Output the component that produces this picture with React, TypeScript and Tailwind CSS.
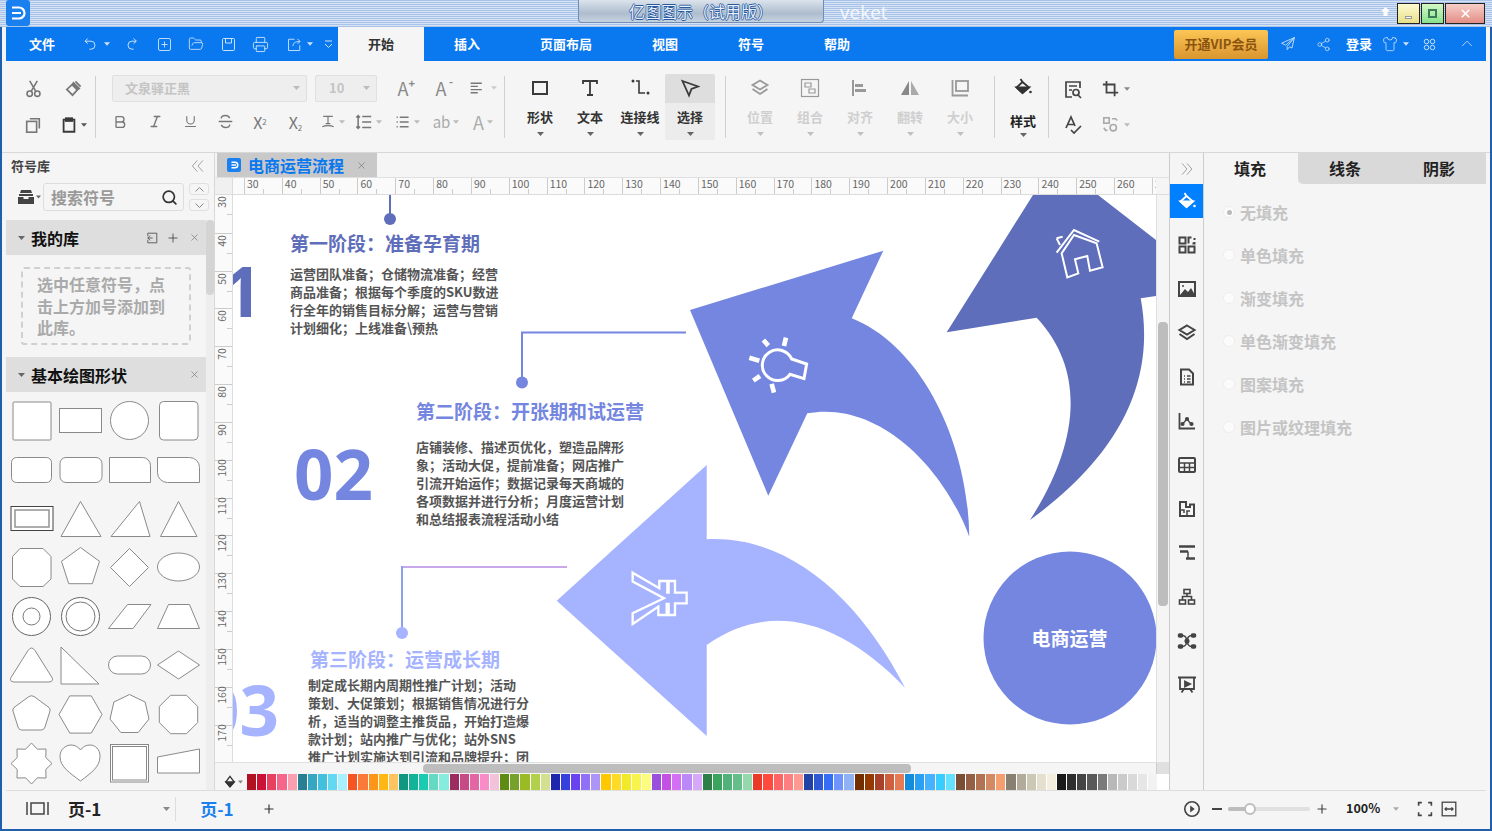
import React from 'react';
import { Bold, Italic, Underline, Search, Plus, X, Printer, FolderOpen, Share2, Shirt } from 'lucide-react';

const Caret = ({ c = '#888', w = 7 }: { c?: string; w?: number }) => (
  <svg width={w} height={4} viewBox="0 0 7 4" className="shrink-0"><path d="M0 0h7L3.5 4z" fill={c} /></svg>
);

const I = ({ s = 20, sw = 1.5, c, children }: { s?: number; sw?: number; c?: string; children: React.ReactNode }) => (
  <svg width={s} height={s} viewBox="0 0 20 20" fill="none" stroke={c || 'currentColor'} strokeWidth={sw} className="shrink-0">{children}</svg>
);

const MenuIcon = ({ w, children, caret }: { w: string; children: React.ReactNode; caret?: boolean }) => (
  <div className={`${w} flex items-center justify-center gap-[5px] text-[#cfe4fb]`}>
    {children}
    {caret && <Caret c="#cfe4fb" w={6} />}
  </div>
);

const palette = [
  '#b01224','#cc1136','#e8415f','#f6658a','#fb9fb0','#277f94','#35a7c3','#42c0de','#62d9f0','#a8efff',
  '#f55522','#fb7a3a','#fd9618','#ffb813','#fec45f','#0f9780','#13b39a','#19cbb0','#66d9c5','#86ecdd',
  '#9c2b60','#c54a86','#e365a3','#f98cc6','#f2c2db','#5f8a14','#76a12a','#9bbb24','#b1d04b','#d3e091',
  '#1e26ae','#3640dc','#6a43f0','#8f70f7','#ab96f8','#ffc800','#fddb27','#f2ea27','#f8f44c','#fcfd7f',
  '#9a50dc','#c251e4','#d46ef5','#bb88f8','#d8a8f8','#2e7f47','#3aa35c','#52b07a','#65be8a','#95d8ab',
  '#ea3a2a','#ff4a3d','#ff6465','#ff7f80','#ff9a90','#2243a6','#2f58d5','#356ef5','#6f94fc','#8fb2f5',
  '#732e00','#943a00','#a9402a','#cf5f3e','#e57a55','#138cdc','#2aa0f5','#45b2ff','#38ccff','#66e0ff',
  '#7a4e35','#945f45','#b27352','#d38a62','#f59e70','#897f72','#b2ab9b','#ccc8b6','#e5dfd0','#f3eede',
  '#1a1a1a','#2e2e2e','#444444','#595959','#7a7a7a','#b8b8b8','#cacaca','#d9d9d9','#e6e6e6','#f2f2f2','#ffffff',
];

const poly = (n: number, r: number, rot = -90, cx = 24.5, cy = 24.5) =>
  Array.from({ length: n }, (_, i) => {
    const a = ((rot + (i * 360) / n) * Math.PI) / 180;
    return `${(cx + r * Math.cos(a)).toFixed(1)},${(cy + r * Math.sin(a)).toFixed(1)}`;
  }).join(' ');

const star = (n: number, R: number, r2: number) =>
  Array.from({ length: n * 2 }, (_, i) => {
    const a = ((-90 + (i * 180) / n) * Math.PI) / 180;
    const q = i % 2 ? r2 : R;
    return `${(24.5 + q * Math.cos(a)).toFixed(1)},${(24.5 + q * Math.sin(a)).toFixed(1)}`;
  }).join(' ');

const shapes: React.ReactNode[] = [
  <rect x="6" y="6" width="38" height="38" rx="1" />,
  <rect x="3.5" y="12.5" width="42" height="24" />,
  <circle cx="24.5" cy="24.5" r="19" />,
  <rect x="5.5" y="5.5" width="38.5" height="38.5" rx="4" />,
  <rect x="4.5" y="12.5" width="40" height="25" rx="5" />,
  <rect x="4" y="12.5" width="42" height="25" rx="6" />,
  <path d="M4.5 12.5h33a8 8 0 0 1 8 8v17h-41z" />,
  <path d="M3.5 12.5h32a10 10 0 0 1 10 10v15h-32a10 10 0 0 1-10-10z" />,
  <g><rect x="4" y="12.5" width="42" height="24" stroke="#444" /><rect x="8" y="16" width="34" height="17" strokeWidth="1.6" stroke="#999" /></g>,
  <polygon points="24.5,7.5 45,42.5 5,42.5" />,
  <polygon points="34.5,7.5 45,42.5 6,42.5" />,
  <polygon points="24.5,7.5 43,42.5 6.5,42.5" />,
  <polygon points="13,5.5 36,5.5 44,13.5 44,36 36,43.5 13,43.5 5.5,36 5.5,13.5" />,
  <polygon points={poly(5, 20)} />,
  <polygon points={poly(4, 19)} />,
  <ellipse cx="24.5" cy="24" rx="21" ry="14" />,
  <g><circle cx="24.5" cy="24.5" r="19" stroke="#666" /><circle cx="24.5" cy="24.5" r="8.5" stroke="#777" /></g>,
  <g><circle cx="24.5" cy="24.5" r="19" stroke="#666" /><circle cx="24.5" cy="24.5" r="14.5" stroke="#777" /></g>,
  <polygon points="22.5,12.5 46,12.5 28,36.5 3.5,36.5" />,
  <polygon points="14.5,12.5 35.5,12.5 45.5,36.5 3.5,36.5" />,
  <path d="M21 9.5q3.5-5 7 0l17 27q2 4-3 4.500H7q-5-.5-3-4.500z" />,
  <polygon points="5,6 43,43 5,43" />,
  <rect x="3.500" y="15" width="42" height="18" rx="9" />,
  <polygon points="24.5,10 45.5,24 24.500,38 3.500,24" />,
  <path d="M22 6.500q2.500-1.500 5 0l15 11q1.500 1.500 1 3.500l-5 16q-1 3-3.500 3h-20q-2.500 0-3.500-3l-5-16q-.5-2 1-3.500z" />,
  <polygon points={poly(6, 21.5, 0)} />,
  <polygon points={poly(7, 20)} />,
  <polygon points={poly(8, 20.8, 22.5)} />,
  <polygon points={star(8, 20.5, 15.5)} />,
  <path d="M24.500 42C14 34 4 28 4 17.500 4 10 10 6 15 6c4 0 7.500 2 9.500 5 2-3 5.500-5 9.500-5 5 0 10 4 10 11.500C44 28 35 34 24.500 42z" />,
  <g stroke="#888"><rect x="5.500" y="5.500" width="38" height="37.500" strokeWidth="1" /><rect x="7.500" y="7.500" width="34" height="33.500" strokeWidth="1" /></g>,
  <polygon points="3.500,18 45.500,10 45.500,34 3.500,34" />,
];

const rightIcons: React.ReactNode[] = [
  <I s={20} sw={2}><rect x="2.500" y="2.500" width="6" height="6" /><rect x="2.500" y="11.500" width="6" height="6" /><rect x="11.500" y="11.500" width="6" height="6" /><path d="M11.500 8.500v-6h3M17.500 3v2M17.500 7v1.500h-2" /></I>,
  <I s={20} sw={2}><rect x="2" y="3" width="16" height="14" /><path d="M3 16l5-6 3 3 3-4 4 7z" fill="currentColor" stroke="none" /><circle cx="6" cy="7" r="1" fill="currentColor" stroke="none" /></I>,
  <I s={20} sw={2}><path d="M10 2.500l7.500 4.500-7.500 4.500L2.500 7z" /><path d="M2.500 11l7.500 5 7.500-5" /></I>,
  <I s={20} sw={2}><path d="M4 2.500h8l4 4v11H4z" /><path d="M7 9h1M10 9h3.500M7 12h1M10 12h3.500M7 15h1M10 15h3.500" strokeWidth="1.500" /></I>,
  <I s={20} sw={1.800}><path d="M2.500 2v15.500H18" /><path d="M5.500 13l4.500-5 4 5" strokeWidth="1.300" /><circle cx="5.500" cy="13" r="1.200" fill="currentColor" /><circle cx="10" cy="8" r="1.200" fill="currentColor" /><circle cx="14.500" cy="13" r="1.200" fill="currentColor" /></I>,
  <I s={20} sw={2}><rect x="2" y="3" width="16" height="14" rx="1" /><path d="M2 8h16M2 12.500h16M7.500 8v9M12.500 8v9" strokeWidth="1.500" /></I>,
  <I s={20} sw={2}><path d="M3 3h6v5h4v-2.500h4V17H3z" /><path d="M3 11h4v3M10 17v-5h3" strokeWidth="1.500" /></I>,
  <I s={20} sw={2}><path d="M2 3.500h16" strokeWidth="2.500" /><path d="M3 8.500h8" strokeWidth="2.500" /><path d="M11 8.500v7" strokeWidth="1.500" /><path d="M9 15.500h9" strokeWidth="2.500" /></I>,
  <I s={20} sw={1.600}><rect x="7" y="2.500" width="6" height="4" /><rect x="2.500" y="13" width="6" height="4" /><rect x="11.500" y="13" width="6" height="4" /><path d="M10 6.500v3M5.500 13V9.500h9V13" /></I>,
  <I s={20} sw={1.500}><rect x="1.500" y="3" width="4" height="3" rx="1" fill="currentColor" /><rect x="14.500" y="3" width="4" height="3" rx="1" fill="currentColor" /><rect x="1.500" y="14" width="4" height="3" rx="1" fill="currentColor" /><rect x="14.500" y="14" width="4" height="3" rx="1" fill="currentColor" /><circle cx="10" cy="10" r="1.800" fill="currentColor" /><path d="M5.500 4.500c3 0 4 2 4.500 5.500s1.500 5.500 4.500 5.500M14.500 4.500c-3 0-4 2-4.500 5.500s-1.500 5.500-4.500 5.500" /></I>,
  <I s={20} sw={1.800}><path d="M1 2.500h18" strokeWidth="2" /><path d="M3 3v11h14V3" /><path d="M8 6.500l5 2.500-5 2.500z" fill="currentColor" /><path d="M7 14l-2.500 3.500M13 14l2.500 3.500" /></I>,
];

const Fill = ({ c = '#333' }: { c?: string }) => (
  <I s={20} sw={1.800} c={c}>
    <path d="M7.500 2l2 3" /><path d="M9.500 5L16 10.500 9.500 16 3.500 10.500z" />
    <path d="M3.500 10.500h12.500L9.500 16z" fill={c} />
    <circle cx="17.500" cy="15" r="1.300" fill={c} stroke="none" />
  </I>
);

const LargeBtn = ({ label, icon, active, dim }: { label: string; icon: React.ReactNode; active?: boolean; dim?: boolean }) => (
  <div className={`w-[50px] h-[66px] rounded-[2px] flex flex-col items-center ${active ? 'bg-[#ececec]' : ''}`}>
    <div className={`w-full h-[29px] flex items-center justify-center rounded-t-[2px] ${active ? 'bg-[#dedede]' : ''} ${dim ? 'text-[#999]' : 'text-[#3a3a3a]'}`}>{icon}</div>
    <div className={`mt-[5px] h-[18px] leading-[18px] text-[13px] font-bold whitespace-nowrap ${dim ? 'text-[#cfcfcf]' : 'text-[#333]'}`}>{label}</div>
    <div className="mt-[6px]"><Caret c={dim ? '#c0c0c0' : '#666'} /></div>
  </div>
);

const Sep = () => <div className="w-px h-[62px] bg-[#cfcfcf] shrink-0" />;

const Cell = ({ w, children, caret, dim }: { w: string; children: React.ReactNode; caret?: boolean; dim?: boolean }) => (
  <div className={`${w} flex items-center justify-center gap-[3px] ${dim ? 'text-[#aaa]' : 'text-[#777]'}`}>
    {children}
    {caret && <Caret c="#bbb" w={6} />}
  </div>
);

const L1 = ['运营团队准备；仓储物流准备；经营', '商品准备；根据每个季度的SKU数进', '行全年的销售目标分解；运营与营销', '计划细化；上线准备\\预热'];
const L2 = ['店铺装修、描述页优化，塑造品牌形', '象；活动大促，提前准备；网店推广', '引流开始运作；数据记录每天商城的', '各项数据并进行分析；月度运营计划', '和总结报表流程活动小结'];
const L3 = ['制定成长期内周期性推广计划；活动', '策划、大促策划；根据销售情况进行分', '析，适当的调整主推货品，开始打造爆', '款计划；站内推广与优化；站外SNS', '推广计划实施达到引流和品牌提升；团'];

const Body = ({ lines }: { lines: string[] }) => (
  <>{lines.map((l) => <div key={l} className="h-[18px] leading-[18px] text-[13px] font-bold text-[#555] whitespace-nowrap">{l}</div>)}</>
);

const Diagram = () => (
  <svg className="absolute inset-0" width="923" height="567" viewBox="233 195 923 567">
    <path d="M390 195V219" stroke="#5f6eba" strokeWidth="2" fill="none" />
    <circle cx="390" cy="219" r="6" fill="#5f6eba" />
    <path d="M686 332.500H522V382" stroke="#7486e0" strokeWidth="2" fill="none" />
    <circle cx="522" cy="382.500" r="6" fill="#7486e0" />
    <path d="M567 567H402" stroke="#c8a8e8" strokeWidth="2" fill="none" />
    <path d="M402 566V633" stroke="#8f9ff0" strokeWidth="2" fill="none" />
    <circle cx="402" cy="633" r="6" fill="#a6b3ff" />

    <path fill="#5f6eba" d="M946.700 332.300L1033 195H1098L1156 240V296L1140.700 298.300C1152 360 1140 440 1030 520C1075 450 1090 375 1036.700 317.700Z" />
    <path fill="#7486e0" d="M883.300 250.700L690 310L768.300 495.700L807.300 413.300C880 400 945 470 969.300 536.700C968 440 920 345 851.700 318.300Z" />
    <path fill="#a6b3ff" d="M706.700 465L556.700 600.700L706.700 736V645C770 600 840 620 905 687.700C860 600 790 535 706.700 539.300Z" />
    <circle cx="1070" cy="638" r="86.500" fill="#7486e0" />

    <g transform="translate(680 190) scale(.3333)" fill="none" stroke="#fff" strokeWidth="6">
      <path d="M1145 190L1182 135L1250 160L1268 232L1230 242L1222 198L1185 208L1195 250L1162 262Z" />
      <path d="M1130 188L1182 120L1258 155" />
      <path d="M1130 145L1148 140M1130 145L1140 165" />
      <path strokeWidth="9" d="M335 507A46 46 0 1 0 330 553L372 566L380 522Z" />
      <path strokeWidth="14" d="M250 450L265 467M318 443L312 468M208 503L238 512M220 572L240 558M275 582L282 608" />
    </g>
    <g transform="translate(540 450) scale(.3333)" fill="none" stroke="#fff" strokeWidth="7">
      <path d="M278 368L358 415V393H382V428H386V393H405V428H440V460H405V495H386V462H380V495H355V470L278 522V490L372 445L278 395Z" />
    </g>
  </svg>
);

export default function App() {
  return (
    <div className="w-[1492px] h-[831px] flex flex-col overflow-hidden bg-[#f5f5f5] font-['Noto_Sans_CJK_SC','Liberation_Sans',sans-serif]">
      {/* title bar */}
      <div className="h-[27px] shrink-0 flex bg-[repeating-linear-gradient(180deg,#a8c2e8_0px,#a8c2e8_1px,#d6e3f5_1px,#d6e3f5_2px)]">
        <div className="ml-[6px] w-[24px] h-[26px] rounded-[3px] bg-[#1a80f0] flex items-center justify-center">
          <svg width="18" height="16" viewBox="0 0 18 16" fill="none" stroke="#fff" strokeWidth="2.200"><path d="M3 2.500h7a5.500 5.500 0 0 1 0 11H3M3 8h9" /></svg>
        </div>
        <div className="ml-[548px] w-[246px] h-[23px] bg-[linear-gradient(180deg,#dbe3ec,#aebdce_60%,#c6d2df)] border border-t-0 border-[#6f8db5] rounded-b-[4px] flex items-center justify-center text-[16px] leading-[20px] text-[#e8f1fc] [text-shadow:0.7px_0_#2a5a9e,-0.7px_0_#2a5a9e,0_0.7px_#2a5a9e,0_-0.7px_#2a5a9e]">亿图图示（试用版）</div>
        <div className="ml-[16px] h-[24px] leading-[24px] text-[19px] text-[#f4f8fe] font-['Open_Sans',sans-serif]">veket</div>
        <div className="ml-auto mr-[7px] h-[27px] flex items-start pt-[3px]">
          <svg className="mr-[6px] mt-[3px]" width="11" height="11" viewBox="0 0 11 11"><path d="M5.500 1L10 5.500H7.500V10h-4V5.500H1z" fill="#fff" /></svg>
          <div className="w-[23px] h-[21px] border border-[#222] bg-[linear-gradient(180deg,#fdfbd0,#e8df8a)] flex items-end justify-center pb-[4px]"><div className="w-[7px] h-[3px] bg-white border border-[#555]/60" /></div>
          <div className="ml-[1px] w-[23px] h-[21px] border border-[#222] bg-[linear-gradient(180deg,#d5f8c6,#86e28c)] flex items-center justify-center"><div className="w-[9px] h-[9px] border-2 border-[#3e7a56]" /></div>
          <div className="ml-[1px] w-[40px] h-[21px] border border-[#222] bg-[linear-gradient(180deg,#f6cfc8,#e28e86)] flex items-center justify-center text-white"><X size={13} strokeWidth={3} /></div>
        </div>
      </div>

      <div className="flex-1 min-h-0 flex flex-col border-x-2 border-b-2 border-[#1f5fae]">
        {/* menu bar */}
        <div className="h-[34px] shrink-0 mx-[4px] bg-[#0a78ee] flex items-center text-white text-[13px] font-bold">
          <div className="w-[72px] text-center">文件</div>
          <MenuIcon w="w-[36px]" caret><I s={16} sw={1.200}><path d="M6 3L2.500 6.500 6 9.500" /><path d="M3 6.500h7a5 5 0 0 1 0 10H8" /></I></MenuIcon>
          <MenuIcon w="w-[32px] ml-[2px]"><I s={16} sw={1.200}><path d="M12 3l3.500 3.500L12 9.500" /><path d="M15 6.500H10a5 5 0 0 0 0 10h2" /></I></MenuIcon>
          <MenuIcon w="w-[32px]"><I s={15} sw={1.200}><rect x="2" y="2" width="16" height="16" rx="2" /><path d="M10 6v8M6 10h8" /></I></MenuIcon>
          <MenuIcon w="w-[32px]"><FolderOpen size={16} strokeWidth={1.300} /></MenuIcon>
          <MenuIcon w="w-[32px]"><I s={15} sw={1.300}><rect x="2" y="2" width="16" height="16" rx="1.500" /><path d="M6 2v6h8V2" /></I></MenuIcon>
          <MenuIcon w="w-[32px]"><Printer size={17} strokeWidth={1.300} /></MenuIcon>
          <MenuIcon w="w-[37px] ml-[5px]" caret><I s={15} sw={1.200}><path d="M10 3H2v15h15v-7" /><path d="M8 12c0-4 3-6 9-6M14 2.500l3.500 3.500L14 9" /></I></MenuIcon>
          <div className="w-[20px] flex justify-center text-[#cfe4fb]"><svg width="9" height="9" viewBox="0 0 9 9" fill="none" stroke="currentColor"><path d="M1 1h7M1 4l3.500 3.500L8 4" /></svg></div>
          <div className="w-[86px] h-full bg-[#f5f5f5] text-[#333] flex items-center justify-center">开始</div>
          <div className="w-[86px] text-center">插入</div>
          <div className="w-[112px] text-center">页面布局</div>
          <div className="w-[86px] text-center">视图</div>
          <div className="w-[86px] text-center">符号</div>
          <div className="w-[86px] text-center">帮助</div>
          <div className="ml-auto flex items-center text-[#cfe4fb]">
            <div className="w-[94px] h-[29px] rounded-[2px] bg-[linear-gradient(180deg,#fcc655,#d9952f)] text-[#8a5410] text-[13px] flex items-center justify-center">开通VIP会员</div>
            <div className="w-[40px] flex justify-center"><I s={16} sw={1.100}><path d="M18 2L2 9l5 2.500L18 2 9 13v4l3-3.500 3 1.500z" /></I></div>
            <div className="w-[30px] flex justify-center"><Share2 size={15} strokeWidth={1.200} /></div>
            <div className="w-[42px] text-center text-white">登录</div>
            <div className="w-[30px] flex justify-center items-center gap-[5px]"><Shirt size={16} strokeWidth={1.200} /><Caret c="#cfe4fb" w={6} /></div>
            <div className="ml-[6px] w-[26px] flex justify-center"><I s={15} sw={1.300}><circle cx="6" cy="6" r="3" /><circle cx="14" cy="6" r="3" /><circle cx="6" cy="14" r="3" /><circle cx="14" cy="14" r="3" /></I></div>
            <div className="ml-[6px] w-[38px] flex justify-center"><I s={14} sw={1.200}><path d="M3 13l7-7 7 7" /></I></div>
          </div>
        </div>

        {/* ribbon */}
        <div className="h-[92px] shrink-0 border-b border-[#d8d8d8] flex items-center pl-[4px]">
          <div className="w-[89px] h-[72px] grid grid-cols-[40px_40px] grid-rows-2 items-center justify-items-center pl-[7px] text-[#777]">
            <I s={19} sw={1.700}><circle cx="6" cy="15.500" r="2.800" /><circle cx="14" cy="15.500" r="2.800" /><path d="M7.500 13L14 2M12.500 13L6 2" /></I>
            <I s={19} sw={1.800}><path d="M12 2.500l5.500 5.500" /><path d="M10 4l6 6-2 1.500-5.500-5.500z" fill="currentColor" /><path d="M8.500 6L3 11l6 6 5-5.500" /></I>
            <I s={18} sw={1.800}><rect x="3" y="6" width="11" height="12" /><path d="M6.500 3H17v11" /></I>
            <div className="flex items-center gap-[3px] text-[#3a3a3a]"><I s={18} sw={2}><path d="M6.500 4H4v13.500h12V4h-2.500" /><rect x="6.500" y="2.500" width="7" height="3" fill="currentColor" /></I><Caret c="#555" w={6} /></div>
          </div>
          <Sep />
          <div className="w-[408px] h-[72px] flex flex-col justify-between pl-[16px] pt-[4px] pb-[8px]">
            <div className="flex items-center h-[27px]">
              <div className="w-[195px] h-[27px] bg-[#eeeeee] border border-[#e0e0e0] rounded-[2px] flex items-center pl-[12px] pr-[6px] text-[13px] font-bold text-[#c4c4c4]">文泉驿正黑<span className="ml-auto"><Caret c="#bbb" /></span></div>
              <div className="ml-[8px] w-[62px] h-[27px] bg-[#eeeeee] border border-[#e0e0e0] rounded-[2px] flex items-center pl-[13px] pr-[6px] text-[13px] font-bold text-[#c4c4c4]">10<span className="ml-auto"><Caret c="#bbb" /></span></div>
              <div className="ml-[14px] w-[24px] text-[#888] text-[18px] leading-none relative text-center">A<span className="absolute right-0 -top-[1px] text-[11px] font-bold">+</span></div>
              <div className="ml-[14px] w-[24px] text-[#888] text-[18px] leading-none relative text-center">A<span className="absolute right-0 -top-[3px] text-[11px] font-bold">-</span></div>
              <div className="ml-[16px] flex items-center gap-[6px] text-[#777]"><I s={16} sw={1.700}><path d="M2 4h14M2 8h9M2 12h14M2 16h9" /></I><Caret c="#ccc" w={6} /></div>
            </div>
            <div className="flex items-center h-[26px] -ml-[10px]">
              <Cell w="w-[36px]"><Bold size={16} strokeWidth={2} /></Cell>
              <Cell w="w-[35px]"><Italic size={15} strokeWidth={2.200} /></Cell>
              <Cell w="w-[35px]"><Underline size={15} strokeWidth={1.800} /></Cell>
              <Cell w="w-[34px]"><I s={17} sw={1.600}><path d="M15 6c-1-2-3-3-5-3S5 4 5 6.500M5 14c1 2 3 3 5 3s5-1 5-3.500M2 10h16" /></I></Cell>
              <Cell w="w-[36px]"><span className="text-[16px] leading-none">X<sup className="text-[8px]">2</sup></span></Cell>
              <Cell w="w-[35px]"><span className="text-[16px] leading-none">X<sub className="text-[8px]">2</sub></span></Cell>
              <Cell w="w-[38px]" caret><I s={16} sw={2}><path d="M4 3h12M10 3v9M7 12h6M3 16c3-2 11-2 14 0" strokeWidth="1.500" /></I></Cell>
              <Cell w="w-[35px]" caret><I s={18} sw={1.700}><path d="M8 4h10M8 10h10M8 16h10M3.500 3v14M1.500 5l2-2 2 2M1.500 15l2 2 2-2" /></I></Cell>
              <Cell w="w-[42px]" caret><I s={16} sw={1.700}><path d="M6 4h11M6 10h11M6 16h11M2 4h1.500M2 10h1.500M2 16h1.500" /></I></Cell>
              <Cell w="w-[36px]" caret dim><span className="text-[15px] leading-none">ab</span></Cell>
              <Cell w="w-[38px]" caret dim><span className="text-[18px] leading-none">A</span></Cell>
            </div>
          </div>
          <Sep />
          <div className="flex items-center pl-[10px] pr-[10px]">
            <LargeBtn label="形状" icon={<I s={20} sw={2}><rect x="3" y="4" width="14" height="12" /></I>} />
            <LargeBtn label="文本" icon={<I s={20} sw={1.800}><path d="M3 6V3h14v3M10 3v14M7 17h6" /></I>} />
            <LargeBtn label="连接线" icon={<I s={20} sw={1.600}><circle cx="3" cy="3" r="1.500" fill="currentColor" stroke="none" /><path d="M6 3h3v12h6" /><circle cx="18" cy="15" r="1.500" fill="currentColor" stroke="none" /></I>} />
            <LargeBtn active label="选择" icon={<I s={20} sw={1.800}><path d="M2.500 3L18 8.500l-6.500 2.500-2.500 6.500z" /></I>} />
          </div>
          <Sep />
          <div className="flex items-center pl-[9px] pr-[9px]">
            <LargeBtn dim label="位置" icon={<I s={20} sw={1.800}><path d="M10 2.500L17.500 7 10 11.500 2.500 7z" /><path d="M2.500 11l7.500 5 7.500-5" /></I>} />
            <LargeBtn dim label="组合" icon={<I s={20} sw={1.200}><rect x="1.500" y="1.500" width="17" height="17" /><path d="M5 5h6v4H5zM9 11h6v4H9z" /></I>} />
            <LargeBtn dim label="对齐" icon={<I s={20} sw={2}><path d="M3 2v16" /><path d="M5 6h8v3H5zM5 11h11v3H5z" fill="currentColor" stroke="none" /></I>} />
            <LargeBtn dim label="翻转" icon={<I s={20} sw={0}><path d="M9 3v14H1z" fill="#888" /><path d="M11 3v14h8z" fill="#aaa" /></I>} />
            <LargeBtn dim label="大小" icon={<I s={20} sw={1.800}><path d="M2.500 2v15.500H18" /><rect x="6" y="3" width="12" height="10" /></I>} />
          </div>
          <Sep />
          <div className="w-[53px] h-[66px] flex flex-col items-center pt-[3px] pl-[3px]">
            <Fill />
            <div className="mt-[15px] text-[13px] leading-[18px] font-bold text-[#222]">样式</div>
            <div className="mt-[3px]"><Caret c="#666" /></div>
          </div>
          <Sep />
          <div className="h-[72px] grid grid-cols-[38px_40px] grid-rows-2 items-center justify-items-center pl-[5px] text-[#444]">
            <I s={20} sw={1.700}><path d="M17 9V3H3v15h6" /><path d="M6 7h8M6 11h3" /><circle cx="13" cy="13.500" r="3" /><path d="M15 16l3 3" /></I>
            <div className="flex items-center gap-[4px] ml-[7px]"><I s={18} sw={2}><path d="M5 1v13h13M1 5h13v13" /></I><Caret c="#888" w={6} /></div>
            <I s={20} sw={1.700}><path d="M3 13L8 2l4 9M4.500 9.500H11" /><path d="M8 15l3 3 7-7" /></I>
            <div className="flex items-center gap-[4px] ml-[7px] text-[#aaa]"><I s={18} sw={1.800}><rect x="2" y="2" width="6" height="6" /><circle cx="12.500" cy="13" r="3.500" /><path d="M11 3h4l2 2M2 13l2 3h2" /></I><Caret c="#bbb" w={6} /></div>
          </div>
        </div>

        {/* main */}
        <div className="flex-1 min-h-0 flex">
          {/* left panel */}
          <div className="w-[213px] shrink-0 border-r border-[#d8d8d8] flex flex-col">
            <div className="h-[26px] flex items-center pl-[9px] pr-[9px] text-[13px] font-bold text-[#444]">
              符号库
              <span className="ml-auto text-[#888]"><I s={14} sw={1.100}><path d="M9 2l-7 8 7 8M17 2l-7 8 7 8" /></I></span>
            </div>
            <div className="mt-[3px] h-[30px] flex items-center">
              <div className="w-[41px] flex items-center justify-end gap-[2px] pr-[2px]">
                <svg width="16" height="14" viewBox="0 0 16 14"><path d="M3 0h10l1 3H2zM1 4h14v2H1zM0 7h5.500v2h5V7H16v7H0z" fill="#444" /></svg>
                <Caret c="#666" w={5} />
              </div>
              <div className="w-[141px] h-[28px] border border-[#dddddd] rounded-[3px] bg-[#f5f5f5] flex items-center pl-[7px] pr-[5px] text-[16px] font-bold text-[#999]">
                搜索符号
                <Search size={17} strokeWidth={2.400} className="ml-auto text-[#333]" />
              </div>
              <div className="ml-[5px] flex flex-col gap-[4px]">
                <div className="w-[20px] h-[12px] border border-[#e0e0e0] rounded-[3px] flex items-center justify-center text-[#888]"><svg width="9" height="5" fill="none" stroke="currentColor"><path d="M.5 4.500L4.500.5l4 4" /></svg></div>
                <div className="w-[20px] h-[12px] border border-[#e0e0e0] rounded-[3px] flex items-center justify-center text-[#888]"><svg width="9" height="5" fill="none" stroke="currentColor"><path d="M.5.5l4 4 4-4" /></svg></div>
              </div>
            </div>
            <div className="mt-[8px] flex-1 min-h-0 flex">
              <div className="w-[204px] pl-[4px] overflow-hidden">
                <div className="h-[35px] bg-[#dedede] flex items-center pl-[11px] pr-[6px] text-[16px] font-bold text-[#111]">
                  <Caret c="#666" w={9} />
                  <span className="ml-[5px]">我的库</span>
                  <span className="ml-auto flex items-center gap-[8px] text-[#555]">
                    <I s={12} sw={1.500}><path d="M3 7V2h15v16H3v-5M11 10H3M7 6l-4 4 4 4" /></I>
                    <Plus size={14} strokeWidth={1.300} className="text-[#333]" />
                    <X size={11} strokeWidth={1.500} className="text-[#777] ml-[1px]" />
                  </span>
                </div>
                <div className="ml-[15px] mt-[12px] w-[170px] h-[78px] border-2 border-dashed border-[#d0d0d0] rounded-[3px] pl-[14px] pr-[6px] pt-[5px] text-[16px] leading-[21.500px] font-bold text-[#aaa]">选中任意符号，点<br />击上方加号添加到<br />此库。</div>
                <div className="mt-[12px] h-[35px] bg-[#dedede] flex items-center pl-[11px] pr-[6px] text-[16px] font-bold text-[#111]">
                  <Caret c="#666" w={9} />
                  <span className="ml-[5px]">基本绘图形状</span>
                  <X size={11} strokeWidth={1.500} className="text-[#777] ml-auto" />
                </div>
                <div className="mt-[4px] ml-[0.5px] grid grid-cols-[repeat(4,49px)] auto-rows-[49px]">
                  {shapes.map((s, i) => (
                    <svg key={i} width="49" height="49" viewBox="0 0 49 49" fill="#fff" stroke="#8a8a8a" strokeWidth="1">{s}</svg>
                  ))}
                </div>
              </div>
              <div className="w-[8px] bg-[#eeeeee]"><div className="w-full h-[75px] bg-[#d4d4d4] rounded-[4px]" /></div>
            </div>
          </div>

          {/* canvas column */}
          <div className="w-[954px] shrink-0 flex flex-col">
            <div className="h-[25px] flex border-b border-[#e0e0e0]">
              <div className="ml-[2px] w-[160px] h-full bg-[#c9c9c9] flex items-center pl-[10px] pr-[10px] text-[16px] font-bold text-[#0a78ee]">
                <div className="w-[14px] h-[14px] mr-[7px] bg-[#1a80f0] rounded-[2px] flex items-center justify-center"><svg width="9" height="8" viewBox="0 0 18 16" fill="none" stroke="#fff" strokeWidth="3"><path d="M3 2.500h7a5.500 5.500 0 0 1 0 11H3M3 8h9" /></svg></div>
                电商运营流程
                <X size={11} strokeWidth={1.500} className="ml-auto text-[#777]" />
              </div>
            </div>
            <div className="h-[17px] flex border-b border-[#dcdcdc]">
              <div className="w-[18px] bg-[#f0f0f0] border-r border-[#dcdcdc]" />
              <div className="w-[923px] bg-[#fafafa] flex overflow-hidden pl-[11px]">
                {Array.from({ length: 25 }, (_, i) => (
                  <div key={i} className="w-[37.830px] shrink-0 h-full border-l border-[#cccccc] relative pl-[2px] text-[10.500px] leading-[11px] text-[#666]">
                    {30 + i * 10}
                    <div className="absolute left-[18px] bottom-0 w-px h-[5px] bg-[#cccccc]" />
                  </div>
                ))}
              </div>
              <div className="flex-1 bg-[#f5f5f5]" />
            </div>
            <div className="flex-1 min-h-0 flex">
              <div className="w-[18px] shrink-0 bg-[#fafafa] border-r border-[#dcdcdc] overflow-hidden">
                {Array.from({ length: 15 }, (_, i) => (
                  <div key={i} className="h-[37.830px] border-t border-[#cccccc] relative first:border-t-0">
                    <div className="absolute left-0 top-0 w-[14px] h-[14px] flex items-center justify-center -rotate-90 text-[10.500px] leading-none text-[#666]">{30 + i * 10}</div>
                    <div className="absolute right-0 top-[19px] w-[5px] h-px bg-[#cccccc]" />
                  </div>
                ))}
              </div>
              <div className="w-[923px] shrink-0 bg-white relative overflow-hidden">
                <Diagram />
                <div className="absolute left-[57px] top-[35px] text-[19px] leading-[26px] font-bold text-[#5f6eba] whitespace-nowrap">第一阶段：准备孕育期</div>
                <div className="absolute left-[57px] top-[70px]"><Body lines={L1} /></div>
                <div className="absolute -left-[50px] top-[53px] text-[69px] leading-[84px] font-bold text-[#5f6eba] font-['Open_Sans',sans-serif]">01</div>
                <div className="absolute left-[183px] top-[203px] text-[19px] leading-[26px] font-bold text-[#7486e0] whitespace-nowrap">第二阶段：开张期和试运营</div>
                <div className="absolute left-[183px] top-[243px]"><Body lines={L2} /></div>
                <div className="absolute left-[61px] top-[236px] text-[69px] leading-[84px] font-bold text-[#7486e0] font-['Open_Sans',sans-serif]">02</div>
                <div className="absolute left-[77px] top-[451px] text-[19px] leading-[26px] font-bold text-[#a6b3ff] whitespace-nowrap">第三阶段：运营成长期</div>
                <div className="absolute left-[75px] top-[481px]"><Body lines={L3} /></div>
                <div className="absolute -left-[33px] top-[472px] text-[69px] leading-[84px] font-bold text-[#a6b3ff] font-['Open_Sans',sans-serif]">03</div>
                <div className="absolute left-[750px] top-[431px] w-[173px] text-center text-[19px] leading-[24px] font-bold text-white">电商运营</div>
              </div>
              <div className="w-[13px] shrink-0 bg-[#f5f5f5] border-l border-[#e0e0e0] pl-[1px] pt-[127px]">
                <div className="w-[10px] h-[284px] bg-[#bdbdbd] rounded-[4px]" />
              </div>
            </div>
            <div className="h-[12px] flex border-t border-[#e0e0e0]">
              <div className="flex-1 pl-[208px] pt-[1px]"><div className="w-[488px] h-[9px] bg-[#bdbdbd] rounded-[4px]" /></div>
              <div className="w-[13px] bg-[#e0e0e0] border-l border-[#cccccc]" />
            </div>
            <div className="h-[16px] flex bg-white">
              <div className="w-[32px] bg-[#f5f5f5] flex items-center justify-center gap-[1px] pl-[3px] text-[#333]">
                <I s={14} sw={1.800}><path d="M10 2l6 8-6 7-6-7z" /><path d="M4 10h12l-6 7z" fill="currentColor" /></I><Caret c="#888" w={5} />
              </div>
              {palette.map((c) => (
                <div key={c} className="flex-1 border-r border-white" style={{ backgroundColor: c }} />
              ))}
            </div>
          </div>

          {/* right icons */}
          <div className="w-[35px] shrink-0 border-x border-[#cccccc] flex flex-col items-center text-[#444]">
            <div className="h-[31px] w-full flex items-center justify-center text-[#888]"><I s={14} sw={1.100}><path d="M3 2l7 8-7 8M10 2l7 8-7 8" /></I></div>
            <div className="h-[34px] w-full bg-[#0080ff] flex items-center justify-center"><Fill c="#fff" /></div>
            <div className="mt-[5px] flex flex-col">
              {rightIcons.map((n, i) => <div key={i} className="h-[44px] flex items-center justify-center">{n}</div>)}
            </div>
          </div>

          {/* right panel */}
          <div className="flex-1 flex flex-col">
            <div className="h-[31px] mr-[4px] flex text-[16px] font-bold text-[#222]">
              <div className="w-[94px] flex items-center justify-center pb-[2px] pr-[2px]">填充</div>
              <div className="flex-1 bg-[#d9d9d9] rounded-bl-[5px] flex">
                <div className="w-[94px] flex items-center justify-center pb-[1px]">线条</div>
                <div className="w-[94px] flex items-center justify-center pb-[1px]">阴影</div>
              </div>
            </div>
            <div className="pl-[19px] pt-[6.500px] flex flex-col">
              {['无填充', '单色填充', '渐变填充', '单色渐变填充', '图案填充', '图片或纹理填充'].map((t, i) => (
                <div key={t} className="h-[43px] flex items-center text-[16px] font-bold text-[#c4c4c4]">
                  <div className="w-[12px] h-[12px] rounded-full bg-[#fbfbfb] border border-[#eeeeee] flex items-center justify-center mr-[5px]">{i === 0 && <div className="w-[5px] h-[5px] rounded-full bg-[#bbbbbb]" />}</div>
                  {t}
                </div>
              ))}
            </div>
          </div>
        </div>

        {/* bottom bar */}
        <div className="h-[39px] shrink-0 mx-[4px] pb-[3px] border-t border-[#dddddd] flex items-center text-[#222]">
          <div className="w-[62px] flex justify-center text-[#444]">
            <svg width="23" height="13" viewBox="0 0 23 13" fill="none" stroke="currentColor" strokeWidth="1.500"><path d="M1 0v13M22 0v13" /><rect x="5" y="1" width="13" height="11" /></svg>
          </div>
          <div className="text-[17px] font-bold">页-1</div>
          <div className="ml-[62px]"><Caret c="#888" /></div>
          <div className="ml-[5px] w-px h-[24px] bg-[#dddddd]" />
          <div className="ml-[24px] text-[17px] font-bold text-[#1a80f0]">页-1</div>
          <Plus size={14} strokeWidth={2} className="ml-[28px] text-[#333]" />
          <div className="ml-auto flex items-center text-[#444] mr-[29px]">
            <I s={18} sw={1.800}><circle cx="10" cy="10" r="8" /><path d="M8 6l5 4-5 4z" fill="currentColor" stroke="none" /></I>
            <div className="ml-[11px] w-[10px] h-[2px] bg-[#444]" />
            <div className="ml-[6px] w-[82px] h-[4px] rounded-[2px] bg-[#e0e0e0] relative">
              <div className="w-[18px] h-full rounded-[2px] bg-[#bdbdbd]" />
              <div className="absolute left-[16px] -top-[4px] w-[12px] h-[12px] rounded-full bg-white border-2 border-[#bdbdbd]" />
            </div>
            <Plus size={14} strokeWidth={2} className="ml-[5px]" />
            <div className="ml-[17px] w-[34px] text-[12.500px] font-bold text-[#222]">100%</div>
            <div className="ml-[13px]"><Caret c="#aaa" w={6} /></div>
            <div className="ml-[18px]"><I s={16} sw={2}><path d="M2 6V2h4M14 2h4v4M18 14v4h-4M6 18H2v-4" /></I></div>
            <div className="ml-[8px]"><I s={16} sw={1.600}><rect x="1.500" y="1.500" width="17" height="17" /><path d="M5 10h10M7 8l-2 2 2 2M13 8l2 2-2 2" /></I></div>
          </div>
        </div>
      </div>
    </div>
  );
}
